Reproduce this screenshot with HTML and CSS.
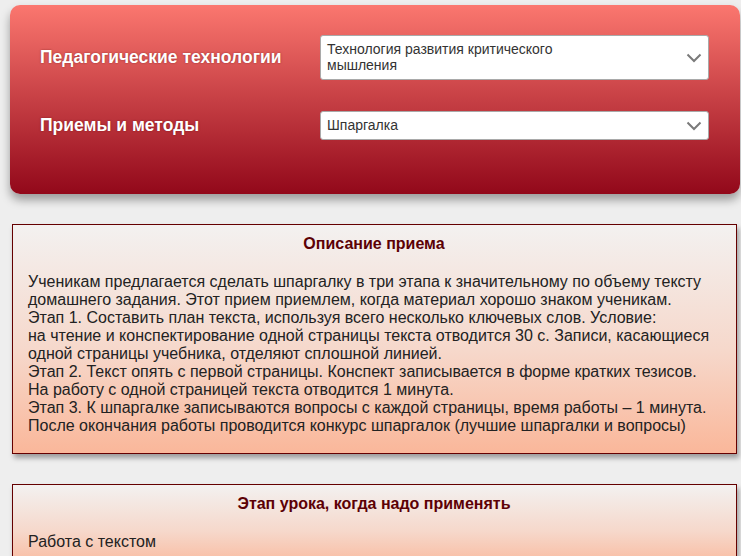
FILE: index.html
```html
<!DOCTYPE html>
<html lang="ru">
<head>
<meta charset="utf-8">
<title>Приемы и методы</title>
<link rel="stylesheet" href="styles.css">
</head>
<body>
<div class="panel">
  <div class="label">Педагогические технологии</div>
  <div class="select tall">
    <span class="select-text">Технология развития критического мышления</span>
    <svg class="chev" width="16" height="10" viewBox="0 0 16 10"><path d="M1.5 1.5 L8 8 L14.5 1.5" fill="none" stroke="#7a7a7a" stroke-width="2"/></svg>
  </div>
  <div class="label">Приемы и методы</div>
  <div class="select">
    <span class="select-text">Шпаргалка</span>
    <svg class="chev" width="16" height="10" viewBox="0 0 16 10"><path d="M1.5 1.5 L8 8 L14.5 1.5" fill="none" stroke="#7a7a7a" stroke-width="2"/></svg>
  </div>
</div>

<div class="card">
  <h3 class="card-title">Описание приема</h3>
  <p class="card-text">Ученикам предлагается сделать шпаргалку в три этапа к значительному по объему тексту<br>домашнего задания. Этот прием приемлем, когда материал хорошо знаком ученикам.<br>Этап 1. Составить план текста, используя всего несколько ключевых слов. Условие:<br>на чтение и конспектирование одной страницы текста отводится 30 с. Записи, касающиеся<br>одной страницы учебника, отделяют сплошной линией.<br>Этап 2. Текст опять с первой страницы. Конспект записывается в форме кратких тезисов.<br>На работу с одной страницей текста отводится 1 минута.<br>Этап 3. К шпаргалке записываются вопросы с каждой страницы, время работы – 1 минута.<br>После окончания работы проводится конкурс шпаргалок (лучшие шпаргалки и вопросы)</p>
</div>

<div class="card">
  <h3 class="card-title">Этап урока, когда надо применять</h3>
  <p class="card-text">Работа с текстом</p>
</div>
</body>
</html>
```

FILE: styles.css
```css
html, body {
  margin: 0;
  padding: 0;
}
body {
  background: #eeeeee;
  font-family: "Liberation Sans", Arial, sans-serif;
  color: #222;
  padding-top: 5px;
}
.panel {
  margin: 0 1px 0 10px;
  padding: 30px 31px 54px 30px;
  border-radius: 10px;
  background: linear-gradient(to bottom, #fb776f 0%, #92081a 100%);
  box-shadow: 0 6px 10px rgba(0, 0, 0, 0.35);
  display: grid;
  grid-template-columns: 280px 1fr;
  row-gap: 31px;
  align-items: center;
}
.label {
  color: #fff;
  font-weight: bold;
  font-size: 17.5px;
  text-shadow: 0 0 2px rgba(80, 0, 0, 0.5);
}
.select {
  position: relative;
  background: #fff;
  border: 1px solid #a9a9a9;
  border-radius: 3px;
  padding: 5px 44px 6px 6px;
  font-size: 14px;
  line-height: 16px;
  color: #333;
  display: flex;
  align-items: center;
}
.select-text {
  max-width: 240px;
}
.chev {
  position: absolute;
  right: 6px;
  top: 50%;
  margin-top: -5px;
}
.card {
  margin: 30px 4px 0 12px;
  border: 1px solid #650000;
  background: linear-gradient(to bottom, #f3f1f0 0%, #f6d8cb 55%, #fab79a 100%);
  box-shadow: 2px 4px 5px rgba(0, 0, 0, 0.35);
  padding: 10px 16px 18px 15px;
}
.card-title {
  margin: 0 0 20px;
  text-align: center;
  font-size: 16px;
  line-height: 18px;
  font-weight: bold;
  color: #5c0005;
}
.card-text {
  margin: 0;
  font-size: 16px;
  line-height: 18px;
  color: #222;
}
```
